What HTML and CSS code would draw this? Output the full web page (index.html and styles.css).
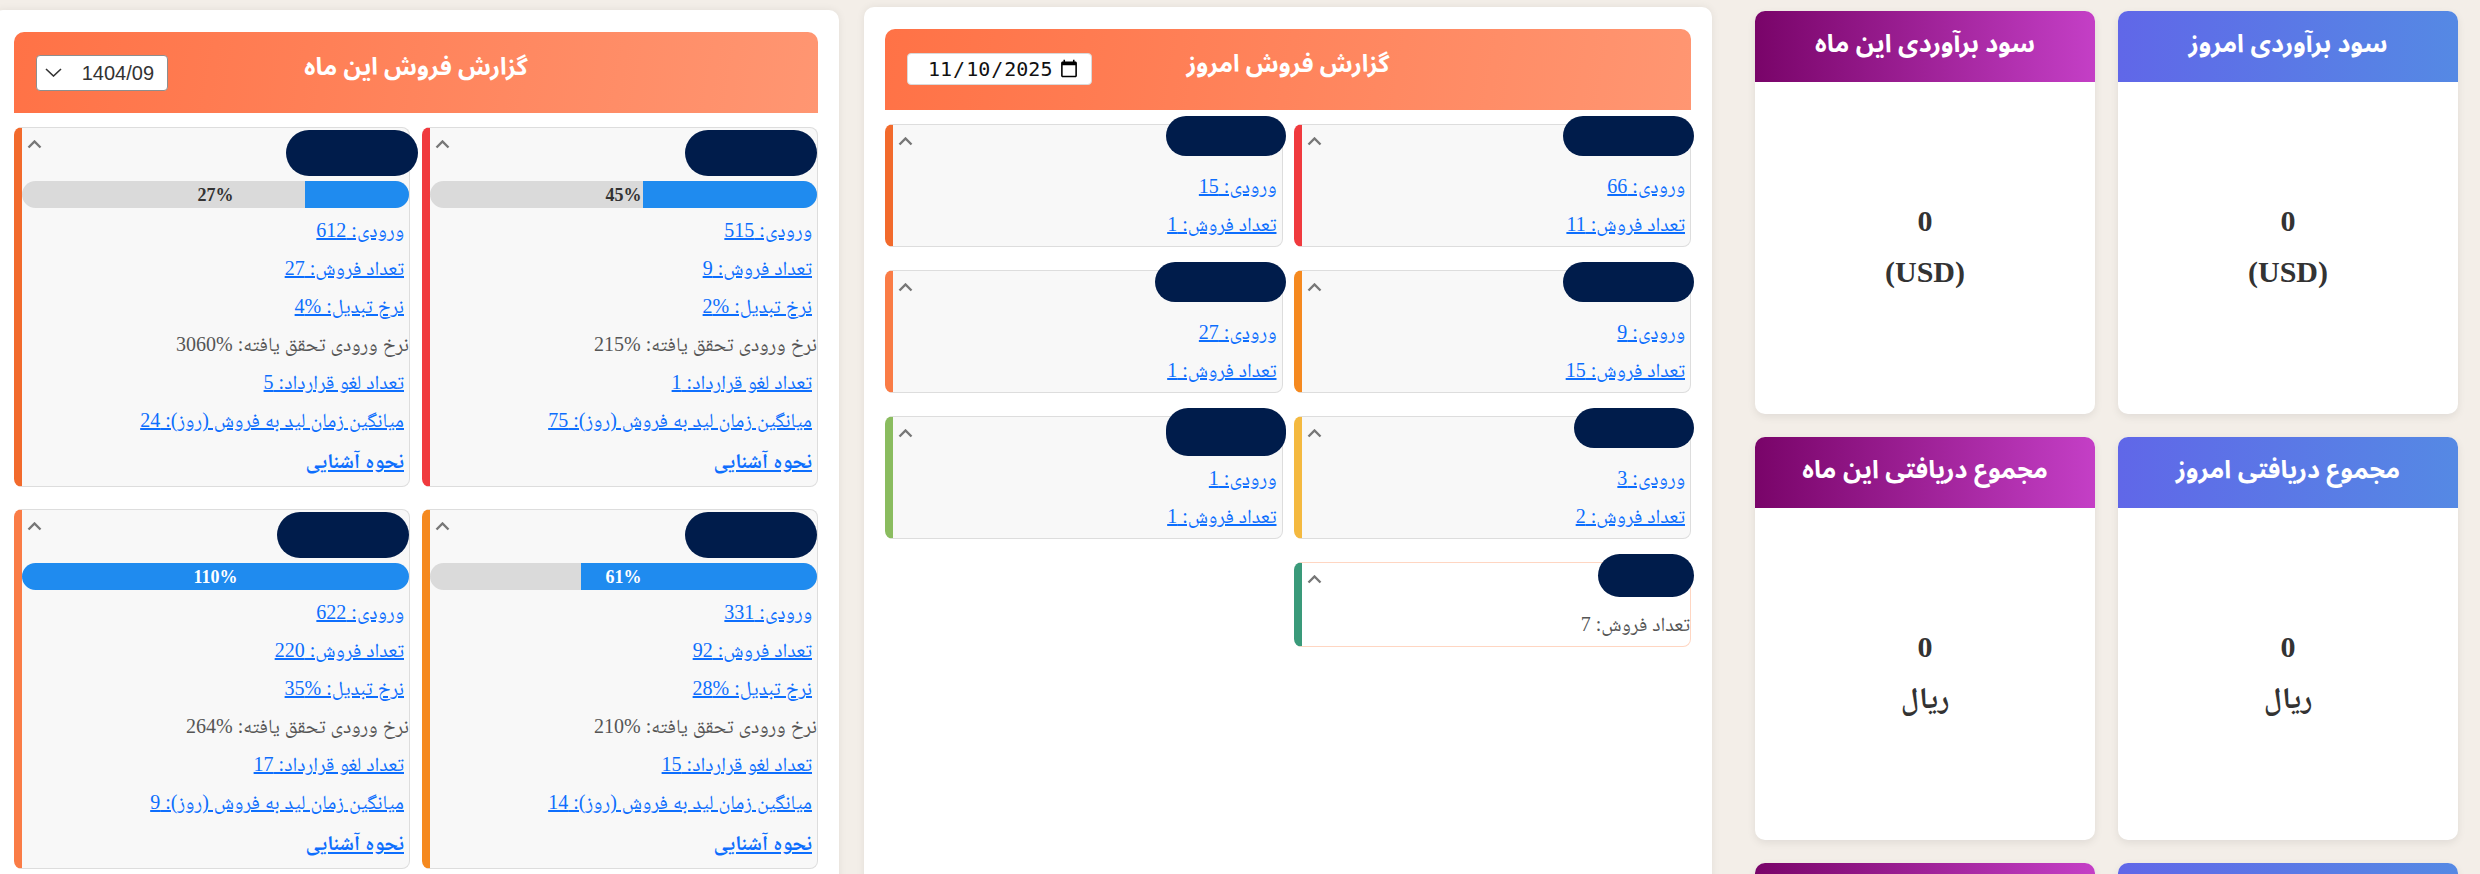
FILE: index.html
```html
<!DOCTYPE html>
<html lang="fa" dir="rtl">
<head>
<meta charset="utf-8">
<title>داشبورد فروش</title>
<link rel="stylesheet" href="styles.css">
</head>
<body>
<main class="dash">

  <!-- KPI tiles -->
  <section class="kpis">
    <article class="kpi kpi-blue">
      <header class="kpi-head">سود برآوردی امروز</header>
      <div class="kpi-body"><div>0</div><div>(USD)</div></div>
    </article>
    <article class="kpi kpi-purple">
      <header class="kpi-head">سود برآوردی این ماه</header>
      <div class="kpi-body"><div>0</div><div>(USD)</div></div>
    </article>
    <article class="kpi kpi-blue">
      <header class="kpi-head">مجموع دریافتی امروز</header>
      <div class="kpi-body"><div>0</div><div>ریال</div></div>
    </article>
    <article class="kpi kpi-purple">
      <header class="kpi-head">مجموع دریافتی این ماه</header>
      <div class="kpi-body"><div>0</div><div>ریال</div></div>
    </article>
    <article class="kpi kpi-blue">
      <header class="kpi-head"></header>
      <div class="kpi-body"></div>
    </article>
    <article class="kpi kpi-purple">
      <header class="kpi-head"></header>
      <div class="kpi-body"></div>
    </article>
  </section>

  <!-- Today's sales -->
  <section class="panel panel-today">
    <header class="panel-head">
      <span></span>
      <h2 class="panel-title">گزارش فروش امروز</h2>
      <input class="day-pick" type="date" value="2025-11-10" dir="ltr">
    </header>
    <div class="cards cards-today">
      <div class="card edge-red">
        <div class="card-head"><span class="name"></span><svg class="caret" viewBox="0 0 15 9"><polyline points="1.5,7.5 7.5,1.5 13.5,7.5"/></svg></div>
        <a class="row" href="#">ورودی: 66</a>
        <a class="row" href="#">تعداد فروش: 11</a>
      </div>
      <div class="card edge-orange">
        <div class="card-head"><span class="name name-s"></span><svg class="caret" viewBox="0 0 15 9"><polyline points="1.5,7.5 7.5,1.5 13.5,7.5"/></svg></div>
        <a class="row" href="#">ورودی: 15</a>
        <a class="row" href="#">تعداد فروش: 1</a>
      </div>
      <div class="card edge-amber">
        <div class="card-head"><span class="name"></span><svg class="caret" viewBox="0 0 15 9"><polyline points="1.5,7.5 7.5,1.5 13.5,7.5"/></svg></div>
        <a class="row" href="#">ورودی: 9</a>
        <a class="row" href="#">تعداد فروش: 15</a>
      </div>
      <div class="card edge-coral">
        <div class="card-head"><span class="name"></span><svg class="caret" viewBox="0 0 15 9"><polyline points="1.5,7.5 7.5,1.5 13.5,7.5"/></svg></div>
        <a class="row" href="#">ورودی: 27</a>
        <a class="row" href="#">تعداد فروش: 1</a>
      </div>
      <div class="card edge-yellow">
        <div class="card-head"><span class="name name-s"></span><svg class="caret" viewBox="0 0 15 9"><polyline points="1.5,7.5 7.5,1.5 13.5,7.5"/></svg></div>
        <a class="row" href="#">ورودی: 3</a>
        <a class="row" href="#">تعداد فروش: 2</a>
      </div>
      <div class="card edge-green">
        <div class="card-head"><span class="name name-s name-tall"></span><svg class="caret" viewBox="0 0 15 9"><polyline points="1.5,7.5 7.5,1.5 13.5,7.5"/></svg></div>
        <a class="row" href="#">ورودی: 1</a>
        <a class="row" href="#">تعداد فروش: 1</a>
      </div>
      <div class="card card-plain edge-teal">
        <div class="card-head"><span class="name name-xs"></span><svg class="caret" viewBox="0 0 15 9"><polyline points="1.5,7.5 7.5,1.5 13.5,7.5"/></svg></div>
        <span class="row row-muted">تعداد فروش: 7</span>
      </div>
    </div>
  </section>

  <!-- This month's sales -->
  <section class="panel panel-month">
    <header class="panel-head">
      <span></span>
      <h2 class="panel-title">گزارش فروش این ماه</h2>
      <label class="month-pick">
        <select><option>1404/09</option></select>
        <svg class="pick-arrow" viewBox="0 0 17 9"><polyline points="1,1 8.5,8 16,1"/></svg>
      </label>
    </header>
    <div class="cards cards-month">
      <div class="card edge-red">
        <div class="card-head"><span class="name"></span><svg class="caret" viewBox="0 0 15 9"><polyline points="1.5,7.5 7.5,1.5 13.5,7.5"/></svg></div>
        <div class="bar"><span class="bar-fill" style="width:45%"></span><span class="bar-label">45%</span></div>
        <a class="row" href="#">ورودی: 515</a>
        <a class="row" href="#">تعداد فروش: 9</a>
        <a class="row" href="#">نرخ تبدیل: %2</a>
        <span class="row row-muted">نرخ ورودی تحقق یافته: %215</span>
        <a class="row" href="#">تعداد لغو قرارداد: 1</a>
        <a class="row" href="#">میانگین زمان لید به فروش (روز): 75</a>
        <a class="row row-strong" href="#">نحوه آشنایی</a>
      </div>
      <div class="card edge-orange">
        <div class="card-head"><span class="name name-out"></span><svg class="caret" viewBox="0 0 15 9"><polyline points="1.5,7.5 7.5,1.5 13.5,7.5"/></svg></div>
        <div class="bar"><span class="bar-fill" style="width:27%"></span><span class="bar-label">27%</span></div>
        <a class="row" href="#">ورودی: 612</a>
        <a class="row" href="#">تعداد فروش: 27</a>
        <a class="row" href="#">نرخ تبدیل: %4</a>
        <span class="row row-muted">نرخ ورودی تحقق یافته: %3060</span>
        <a class="row" href="#">تعداد لغو قرارداد: 5</a>
        <a class="row" href="#">میانگین زمان لید به فروش (روز): 24</a>
        <a class="row row-strong" href="#">نحوه آشنایی</a>
      </div>
      <div class="card edge-amber">
        <div class="card-head"><span class="name"></span><svg class="caret" viewBox="0 0 15 9"><polyline points="1.5,7.5 7.5,1.5 13.5,7.5"/></svg></div>
        <div class="bar"><span class="bar-fill" style="width:61%"></span><span class="bar-label bar-label-light">61%</span></div>
        <a class="row" href="#">ورودی: 331</a>
        <a class="row" href="#">تعداد فروش: 92</a>
        <a class="row" href="#">نرخ تبدیل: %28</a>
        <span class="row row-muted">نرخ ورودی تحقق یافته: %210</span>
        <a class="row" href="#">تعداد لغو قرارداد: 15</a>
        <a class="row" href="#">میانگین زمان لید به فروش (روز): 14</a>
        <a class="row row-strong" href="#">نحوه آشنایی</a>
      </div>
      <div class="card edge-coral">
        <div class="card-head"><span class="name"></span><svg class="caret" viewBox="0 0 15 9"><polyline points="1.5,7.5 7.5,1.5 13.5,7.5"/></svg></div>
        <div class="bar"><span class="bar-fill" style="width:100%"></span><span class="bar-label bar-label-light">110%</span></div>
        <a class="row" href="#">ورودی: 622</a>
        <a class="row" href="#">تعداد فروش: 220</a>
        <a class="row" href="#">نرخ تبدیل: %35</a>
        <span class="row row-muted">نرخ ورودی تحقق یافته: %264</span>
        <a class="row" href="#">تعداد لغو قرارداد: 17</a>
        <a class="row" href="#">میانگین زمان لید به فروش (روز): 9</a>
        <a class="row row-strong" href="#">نحوه آشنایی</a>
      </div>
    </div>
  </section>

</main>
</body>
</html>
```

FILE: styles.css
```css
html, body {
  margin: 0;
  height: 874px;
  overflow: hidden;
  background: #f3eee8;
}

body {
  font-family: "Liberation Serif", "Noto Naskh Arabic", "DejaVu Serif", serif;
  color: #333;
}

.dash {
  display: flex;
  align-items: flex-start;
  padding-right: 22px;
}

/* ---------- KPI tiles ---------- */
.kpis {
  flex: 0 0 auto;
  margin-top: 11px;
  margin-left: 43px;
  display: grid;
  grid-template-columns: 340px 340px;
  grid-auto-rows: 403px;
  gap: 23px;
}

.kpi {
  display: flex;
  flex-direction: column;
  background: #fff;
  border-radius: 10px;
  overflow: hidden;
  box-shadow: 0 3px 8px rgba(0, 0, 0, 0.08);
}

.kpi-head {
  height: 71px;
  flex: 0 0 auto;
  display: flex;
  align-items: center;
  justify-content: center;
  padding-bottom: 6px;
  box-sizing: border-box;
  color: #fff;
  font: bold 25px "Noto Sans Arabic", "DejaVu Sans", sans-serif;
}

.kpi-blue .kpi-head {
  background: linear-gradient(90deg, #6067e8, #5589e4);
}

.kpi-purple .kpi-head {
  background: linear-gradient(90deg, #790469, #c43fc6);
}

.kpi-body {
  flex: 1;
  display: flex;
  flex-direction: column;
  align-items: center;
  justify-content: center;
  padding-bottom: 5px;
  font: bold 30px/51px "Liberation Serif", "Noto Naskh Arabic", serif;
  color: #333;
}

/* ---------- report panels ---------- */
.panel {
  flex: 0 0 auto;
  background: #fff;
  border-radius: 10px;
  padding: 22px 21px;
  min-height: 960px;
  box-shadow: 0 0 8px rgba(0, 0, 0, 0.07);
}

.panel-today {
  width: 806px;
  margin-top: 7px;
  margin-left: 25px;
}

.panel-month {
  width: 804px;
  margin-top: 10px;
}

.panel-head {
  height: 81px;
  display: grid;
  grid-template-columns: 1fr auto 1fr;
  align-items: center;
  padding: 0 22px;
  border-radius: 10px 10px 0 0;
  background: linear-gradient(100deg, #ff7246, #ff9672);
}

.panel-title {
  margin: 0 0 10px;
  color: #fff;
  font: bold 24px "Noto Sans Arabic", "DejaVu Sans", sans-serif;
}

.day-pick {
  justify-self: end;
  box-sizing: border-box;
  width: 185px;
  height: 32px;
  padding: 0 10px 0 19px;
  border: 1px solid #d9d9d9;
  border-radius: 4px;
  background: #fff;
  color: #111;
  font: 20px "DejaVu Sans Mono", monospace;
  margin-top: -2px;
}

/* month picker: plain select with a drawn chevron */
.month-pick {
  justify-self: end;
  box-sizing: border-box;
  width: 132px;
  height: 36px;
  display: flex;
  align-items: center;
  gap: 12px;
  padding: 0 13px 0 8px;
  border: 1px solid #8e8e8e;
  border-radius: 4px;
  background: #fff;
}

.month-pick select {
  flex: 1;
  min-width: 0;
  appearance: none;
  border: 0;
  padding: 0;
  background: transparent;
  color: #333;
  font: 20px "Liberation Sans", sans-serif;
  outline: none;
}

.pick-arrow {
  width: 17px;
  height: 9px;
  fill: none;
  stroke: #333;
  stroke-width: 1.6;
}

/* ---------- person cards ---------- */
.cards {
  display: grid;
  grid-template-columns: 1fr 1fr;
  align-items: start;
  margin-top: 14px;
}

.cards-today {
  gap: 23px 11px;
}

.cards-month {
  gap: 22px 12px;
}

.card {
  background: #f8f8f8;
  border: 1px solid #ddd;
  border-left: 8px solid #f26a2c;
  border-radius: 8px;
  padding-bottom: 3px;
}

.card-plain {
  background: #fff;
  border-color: #ffd6c2;
}

.edge-orange { border-left-color: #f26a2c; }
.edge-red    { border-left-color: #f03a3e; }
.edge-coral  { border-left-color: #fa7c46; }
.edge-amber  { border-left-color: #f5891f; }
.edge-yellow { border-left-color: #f4b940; }
.edge-green  { border-left-color: #8abc5f; }
.edge-teal   { border-left-color: #3a9a7a; }

.card-head {
  display: flex;
  justify-content: space-between;
  align-items: flex-start;
  height: 42px;
}

.cards-month .card-head {
  height: 53px;
}

.name {
  display: block;
  width: 131px;
  height: 40px;
  margin: -9px -4px 0 0;
  border-radius: 22px;
  background: #001c4b;
}

.name-s { width: 120px; }
.name-xs { width: 96px; height: 43px; }
.name-tall { height: 48px; }

.cards-month .name {
  width: 132px;
  height: 46px;
  margin: 2px 0 0;
  border-radius: 23px;
}

.cards-month .name-out {
  margin-right: -9px;
}

.caret {
  width: 15px;
  height: 9px;
  margin: 12px 0 0 5px;
  fill: none;
  stroke: #777;
  stroke-width: 2.4;
}

.row {
  display: block;
  font-size: 20px;
  line-height: 38px;
  white-space: nowrap;
}

a.row {
  color: #0d6efd;
  text-decoration: underline;
  margin-right: 5px;
}

.row-muted {
  color: #555;
}

.row-strong {
  font-weight: bold;
  font-size: 21px;
  line-height: 44px;
}

/* progress toward target */
.bar {
  display: grid;
  height: 27px;
  margin-bottom: 3px;
  border-radius: 14px;
  background: #dadada;
  overflow: hidden;
}

.bar > * {
  grid-area: 1 / 1;
}

.bar-fill {
  justify-self: start;
  height: 100%;
  background: #1f8bef;
}

.bar-label {
  justify-self: center;
  align-self: center;
  font: bold 18px/1 "Liberation Serif", serif;
  color: #333;
}

.bar-label-light {
  color: #fff;
}
```
